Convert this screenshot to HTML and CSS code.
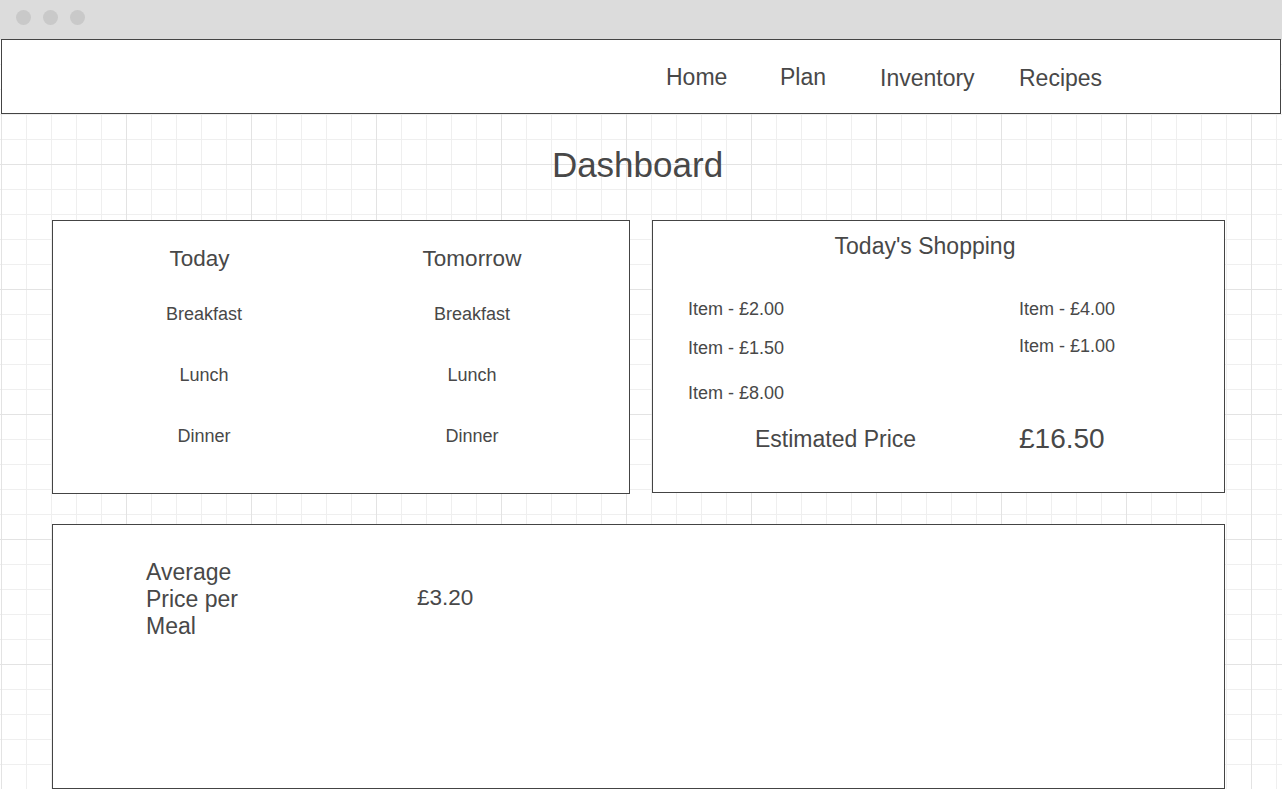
FILE: index.html
```html
<!DOCTYPE html>
<html lang="en">
<head>
<meta charset="utf-8">
<title>Dashboard</title>
<link rel="stylesheet" href="styles.css">
</head>
<body>
  <div class="titlebar">
    <span class="dot"></span>
    <span class="dot"></span>
    <span class="dot"></span>
  </div>
  <div class="canvas">
    <nav class="nav">
      <a class="nav-link nav-home" href="#">Home</a>
      <a class="nav-link nav-plan" href="#">Plan</a>
      <a class="nav-link nav-inventory nav-link-low" href="#">Inventory</a>
      <a class="nav-link nav-link-low" href="#">Recipes</a>
    </nav>

    <h1 class="page-title">Dashboard</h1>

    <div class="card-row">
      <section class="card card-meals">
        <div class="day-col day-col-today">
          <h2 class="day-title">Today</h2>
          <div class="meal meal-first">Breakfast</div>
          <div class="meal">Lunch</div>
          <div class="meal">Dinner</div>
        </div>
        <div class="day-col">
          <h2 class="day-title">Tomorrow</h2>
          <div class="meal meal-first">Breakfast</div>
          <div class="meal">Lunch</div>
          <div class="meal">Dinner</div>
        </div>
      </section>

      <section class="card card-shopping">
        <h2 class="shop-title">Today's Shopping</h2>
        <div class="shop-items">
          <ul class="item-col item-col-left">
            <li class="item">Item - £2.00</li>
            <li class="item">Item - £1.50</li>
            <li class="item item-last">Item - £8.00</li>
          </ul>
          <ul class="item-col item-col-right">
            <li class="item">Item - £4.00</li>
            <li class="item">Item - £1.00</li>
          </ul>
        </div>
        <div class="estimate">
          <span class="estimate-label">Estimated Price</span>
          <span class="estimate-value">£16.50</span>
        </div>
      </section>
    </div>

    <section class="card card-average">
      <div class="avg-label">Average Price per Meal</div>
      <div class="avg-value">£3.20</div>
    </section>
  </div>
</body>
</html>
```

FILE: styles.css
```css
html, body {
  margin: 0;
  padding: 0;
}

body {
  font-family: "Liberation Sans", Arial, sans-serif;
  color: #484848;
  background: #fff;
  width: 1282px;
  height: 789px;
  overflow: hidden;
}

.titlebar {
  height: 39px;
  background: #dcdcdc;
  display: flex;
  align-items: center;
  gap: 12px;
  padding-left: 16px;
  box-sizing: border-box;
  padding-bottom: 4px;
}

.dot {
  width: 15px;
  height: 15px;
  border-radius: 50%;
  background: #c9c9c9;
}

.canvas {
  height: 750px;
  background-color: #fff;
  background-image:
    linear-gradient(to right, #e3e3e3 1px, transparent 1px),
    linear-gradient(to bottom, #e3e3e3 1px, transparent 1px),
    linear-gradient(to right, #efefef 1px, transparent 1px),
    linear-gradient(to bottom, #efefef 1px, transparent 1px);
  background-size: 125px 125px, 125px 125px, 25px 25px, 25px 25px;
  background-position: 1px 0, 1px 0, 1px 0, 1px 0;
  overflow: hidden;
}

.nav {
  height: 75px;
  box-sizing: border-box;
  margin: 0 1px;
  border: 1px solid #444;
  background: #fff;
  display: flex;
  align-items: center;
  padding-left: 664px;
}

.nav-link {
  font-size: 23px;
  color: #484848;
  text-decoration: none;
  line-height: 26px;
}

.nav-home {
  width: 114px;
}

.nav-plan {
  width: 100px;
}

.nav-inventory {
  width: 139px;
}

.nav-link-low {
  margin-top: 2px;
}

.page-title {
  margin: 31px 0 0;
  font-size: 35px;
  font-weight: normal;
  line-height: 40px;
  text-align: center;
  padding-right: 7px;
}

.card-row {
  display: flex;
  align-items: flex-start;
  gap: 22px;
  margin-top: 35px;
  padding-left: 52px;
}

.card {
  box-sizing: border-box;
  border: 1px solid #444;
  background: #fff;
}

.card-meals {
  width: 578px;
  height: 274px;
  display: flex;
  padding: 25px 0 0 48px;
  gap: 68px;
}

.day-col {
  width: 200px;
  display: flex;
  flex-direction: column;
  align-items: center;
}

.day-col-today {
  padding-left: 3px;
}

.day-col-today .day-title {
  margin-right: 9px;
}

.day-title {
  margin: 0;
  font-size: 22.5px;
  font-weight: normal;
  line-height: 26px;
}

.meal {
  font-size: 18px;
  line-height: 22px;
  margin-top: 39px;
}

.meal-first {
  margin-top: 31px;
}

.card-shopping {
  width: 573px;
  height: 273px;
  padding: 12px 0 0 0;
}

.shop-title {
  margin: 0;
  font-size: 23px;
  font-weight: normal;
  line-height: 26px;
  text-align: center;
  padding-right: 27px;
}

.shop-items {
  display: flex;
  margin-top: 40px;
  padding-left: 35px;
}

.item-col {
  list-style: none;
  margin: 0;
  padding: 0;
  display: flex;
  flex-direction: column;
}

.item-col-left {
  width: 331px;
  gap: 19px;
}

.item-col-right {
  gap: 17px;
}

.item {
  font-size: 18px;
  line-height: 20px;
}

.item-last {
  margin-top: 6px;
}

.estimate {
  display: flex;
  align-items: center;
  margin-top: 21px;
  padding-left: 102px;
  height: 30px;
}

.estimate-label {
  width: 264px;
  font-size: 23px;
}

.estimate-value {
  font-size: 28px;
}

.card-average {
  width: 1173px;
  height: 265px;
  margin: 30px 0 0 52px;
  display: flex;
  align-items: flex-start;
  padding: 34px 0 0 93px;
  gap: 141px;
}

.avg-label {
  width: 130px;
  font-size: 23px;
  line-height: 27px;
}

.avg-value {
  font-size: 22.5px;
  line-height: 27px;
  margin-top: 25px;
}
```
